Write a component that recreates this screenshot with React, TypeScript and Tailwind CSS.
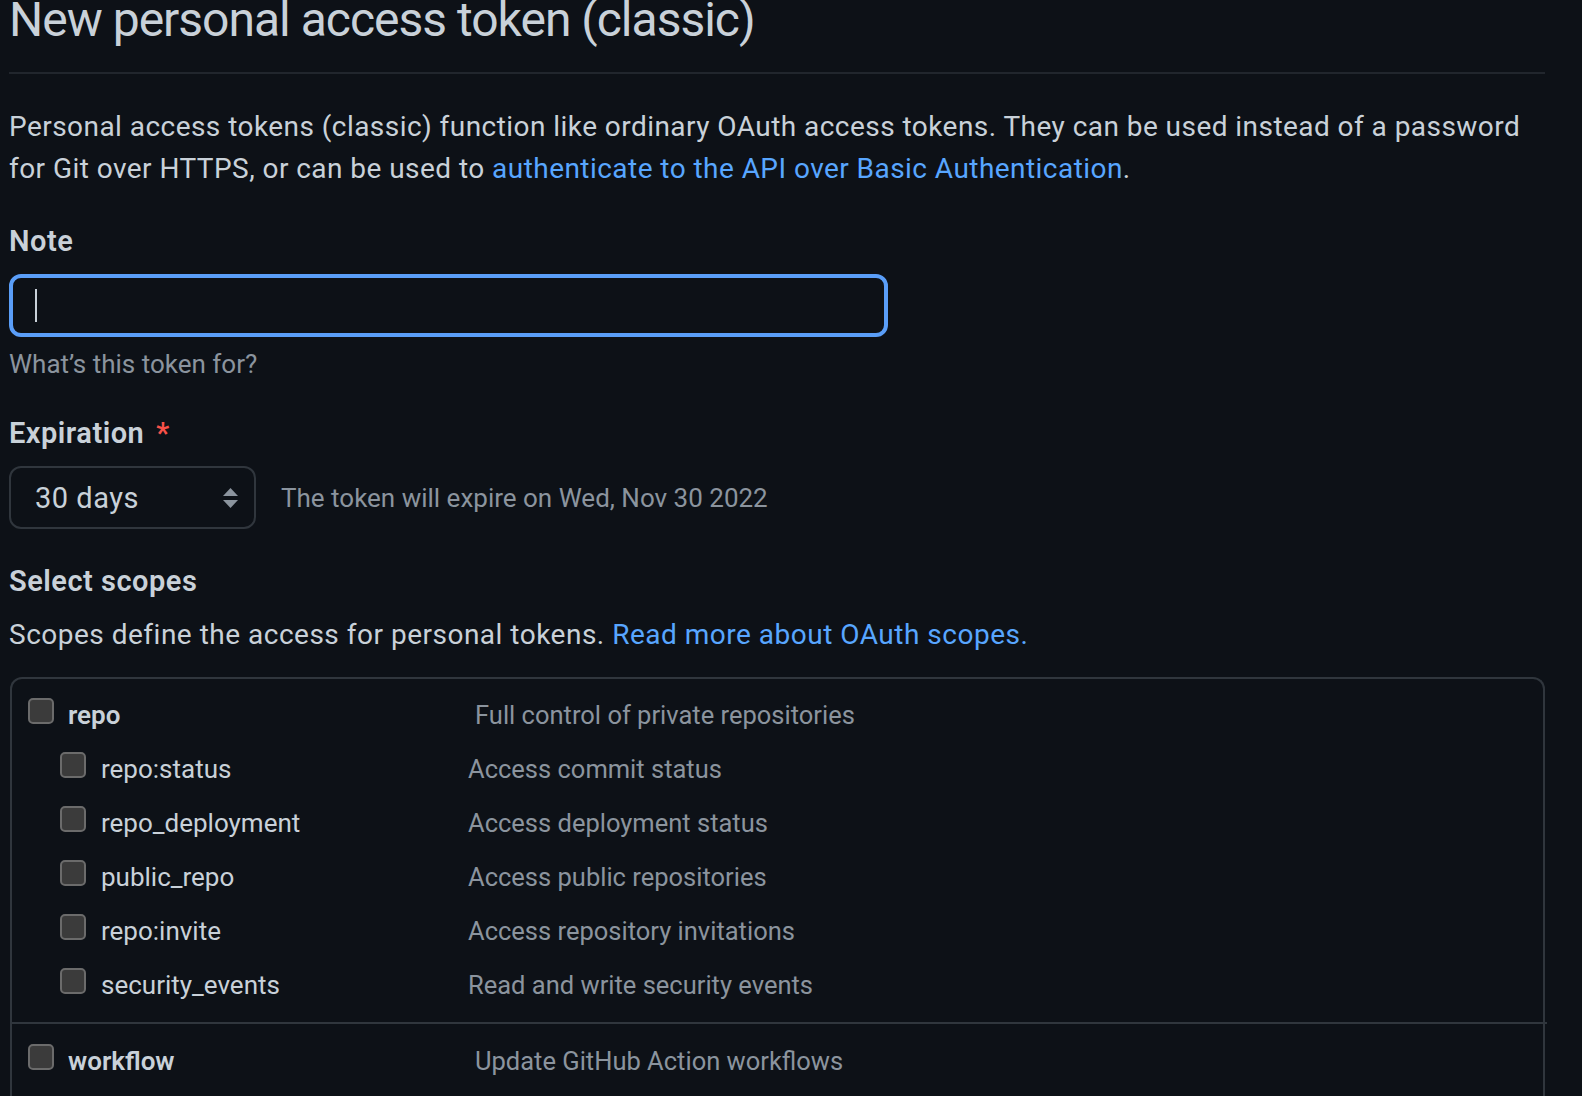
import React from "react";

const font = { fontFamily: "Roboto, 'Noto Sans', 'Liberation Sans', sans-serif" };

function Checkbox() {
  return (
    <div className="mt-[4px] h-[26px] w-[26px] shrink-0 rounded-[5px] border-2 border-[#6b6b6b] bg-[#3b3b3b]" />
  );
}

function ScopeRow({
  name,
  desc,
  sub,
}: {
  name: string;
  desc: string;
  sub?: boolean;
}) {
  return (
    <div className="flex items-start">
      <div className={sub ? "flex w-[408px] shrink-0 items-start gap-[15px]" : "flex w-[447px] shrink-0 items-start gap-[14px]"}>
        <Checkbox />
        <span className={sub ? "text-[26px] leading-[42px] text-[#c9d1d9]" : "text-[26px] font-semibold leading-[42px] text-[#c9d1d9]"}>
          {name}
        </span>
      </div>
      <span className="text-[25.5px] leading-[42px] text-[#8b949e]">{desc}</span>
    </div>
  );
}

export default function App() {
  const subs: [string, string][] = [
    ["repo:status", "Access commit status"],
    ["repo_deployment", "Access deployment status"],
    ["public_repo", "Access public repositories"],
    ["repo:invite", "Access repository invitations"],
    ["security_events", "Read and write security events"],
  ];
  return (
    <div className="h-[1096px] w-full overflow-hidden bg-[#0d1117]" style={font}>
      <div className="ml-[9px] w-[1536px]">
        <div className="mt-[-10px] border-b-2 border-[#21262d] pb-[22px]">
          <h1 className="text-[48px] font-normal leading-[60px] tracking-[-1px] text-[#c9d1d9]">
            New personal access token (classic)
          </h1>
        </div>
        <p className="mt-[32px] whitespace-nowrap text-[28px] leading-[42px] tracking-[0.45px] text-[#c9d1d9]">
          Personal access tokens (classic) function like ordinary OAuth access tokens. They can be used instead of a password
          <br />
          for Git over HTTPS, or can be used to{" "}
          <span className="text-[#58a6ff]">authenticate to the API over Basic Authentication</span>.
        </p>

        <div className="mt-[30px] text-[29px] font-semibold leading-[42px] tracking-[0.5px] text-[#c9d1d9]">Note</div>
        <div className="mt-[12px] flex h-[63px] w-[879px] items-center rounded-[12px] border-[4px] border-[#5a9ef8] pl-[22px]">
          <div className="h-[33px] w-[2px] bg-[#c9d1d9]" />
        </div>
        <div className="mt-[9px] text-[26px] leading-[36px] text-[#8b949e]">What’s this token for?</div>

        <div className="mt-[30px] flex items-center gap-[12px] text-[29px] font-semibold leading-[42px] tracking-[0.5px] text-[#c9d1d9]">
          <span>Expiration</span>
          <span className="text-[#f85149]">*</span>
        </div>
        <div className="mt-[12px] flex items-center gap-[25px]">
          <div className="flex h-[63px] w-[247px] items-center justify-between rounded-[12px] border-2 border-[#30363d] pl-[24px] pr-[16px]">
            <span className="text-[29px] leading-[42px] tracking-[0.5px] text-[#c9d1d9]">30 days</span>
            <svg width="15" height="20" viewBox="0 0 15 20">
              <path d="M7.5 0 L15 8 L0 8 Z" fill="#8b949e" />
              <path d="M0 12 L15 12 L7.5 20 Z" fill="#8b949e" />
            </svg>
          </div>
          <span className="text-[26px] leading-[36px] text-[#8b949e]">The token will expire on Wed, Nov 30 2022</span>
        </div>

        <div className="mt-[31px] text-[29px] font-semibold leading-[42px] tracking-[0.5px] text-[#c9d1d9]">Select scopes</div>
        <p className="mt-[12px] text-[28px] leading-[42px] tracking-[0.5px] text-[#c9d1d9]">
          Scopes define the access for personal tokens.{" "}
          <span className="text-[#58a6ff]">Read more about OAuth scopes.</span>
        </p>

        <div className="mt-[21px] ml-[1px] rounded-t-[12px] border-2 border-b-0 border-[#30363d]">
          <div className="flex flex-col gap-[12px] pb-[16px] pl-[16px] pt-[15px]">
            <ScopeRow name="repo" desc="Full control of private repositories" />
            <div className="flex flex-col gap-[12px] pl-[32px]">
              {subs.map(([n, d]) => (
                <ScopeRow key={n} name={n} desc={d} sub />
              ))}
            </div>
          </div>
          <div className="mr-[-4px] border-t-2 border-[#30363d] pb-[40px] pl-[16px] pt-[16px]">
            <ScopeRow name="workflow" desc="Update GitHub Action workflows" />
          </div>
        </div>
      </div>
    </div>
  );
}
